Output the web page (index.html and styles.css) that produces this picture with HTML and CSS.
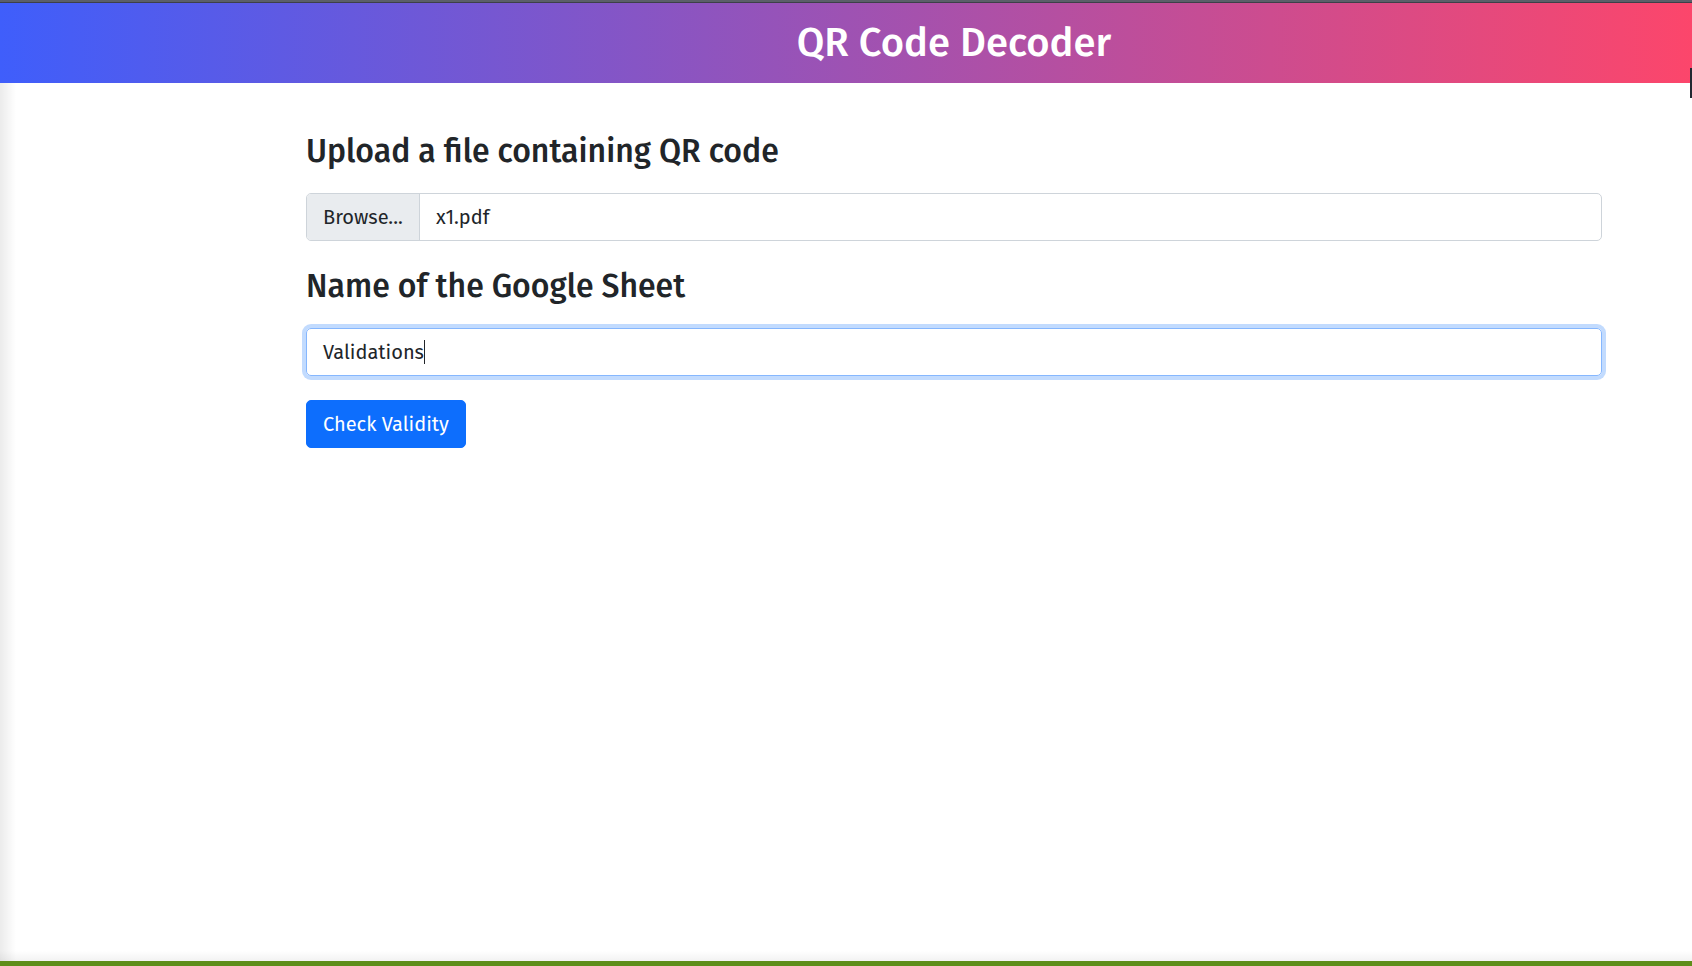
FILE: index.html
```html
<!DOCTYPE html>
<html lang="en">
<head>
<meta charset="utf-8">
<title>QR Code Decoder</title>
<link rel="stylesheet" href="styles.css">
</head>
<body>
<div class="topline"></div>
<header class="header">
  <h1 class="header-title">QR Code Decoder</h1>
  <span class="edge-marker"></span>
</header>
<main class="main">
  <div class="container">
    <form class="form">
      <h2 class="section-title title-upload">Upload a file containing QR code</h2>
      <div class="file-field">
        <span class="file-browse">Browse...</span>
        <span class="file-name">x1.pdf</span>
      </div>
      <h2 class="section-title title-sheet">Name of the Google Sheet</h2>
      <div class="text-field is-focused" role="textbox"><span class="text-value">Validations</span><span class="caret"></span></div>
      <button type="button" class="btn-primary">Check Validity</button>
    </form>
  </div>
</main>
<footer class="bottomline"></footer>
</body>
</html>
```

FILE: styles.css
```css
* { box-sizing: border-box; }

html, body {
  margin: 0;
  padding: 0;
  height: 966px;
  overflow: hidden;
}

body {
  display: flex;
  flex-direction: column;
  font-family: "Fira Sans", Roboto, "Liberation Sans", sans-serif;
  color: #212529;
  background: #ffffff;
}

.topline {
  height: 3px;
  background: #5b5f69;
  border-bottom: 1px solid #3d4049;
  flex: none;
}

.header {
  position: relative;
  height: 80px;
  flex: none;
  background: linear-gradient(90deg, #3f5efb 0%, #fc466b 100%);
  display: flex;
  align-items: center;
  justify-content: center;
  padding-left: 216px;
}

.header-title {
  margin: 0;
  color: #ffffff;
  font-size: 40px;
  font-weight: 500;
  line-height: 1.2;
}

.edge-marker {
  position: absolute;
  right: 0;
  top: 65px;
  width: 2px;
  height: 30px;
  background: #222831;
  z-index: 2;
}

.main {
  flex: 1;
  padding-left: 216px;
  background:
    linear-gradient(to right, rgba(0,0,0,0.08), rgba(0,0,0,0) 16px),
    linear-gradient(to top, rgba(0,0,0,0.05), rgba(0,0,0,0) 10px),
    #ffffff;
}

.container {
  max-width: 1320px;
  margin: 0 auto;
  padding: 49px 12px 0;
}

.form {
  display: flex;
  flex-direction: column;
  align-items: flex-start;
}

.section-title {
  margin: 0;
  font-size: 32px;
  font-weight: 500;
  line-height: 38px;
}

.title-upload { margin-bottom: 23px; }
.title-sheet { margin-top: 26px; margin-bottom: 23px; }

.file-field {
  width: 100%;
  height: 48px;
  display: flex;
  border: 1px solid #ced4da;
  border-radius: 5px;
  overflow: hidden;
  font-size: 20px;
  line-height: 30px;
}

.file-browse {
  background: #e9ecef;
  border-right: 1px solid #ced4da;
  padding: 8px 16px;
  width: 113px;
  color: #212529;
}

.file-name {
  padding: 8px 16px;
}

.text-field {
  width: 100%;
  height: 48px;
  display: flex;
  align-items: center;
  padding: 0 16px;
  border: 1px solid #ced4da;
  border-radius: 5px;
  font-size: 20px;
  line-height: 30px;
}

.text-field.is-focused {
  border-color: #86b7fe;
  box-shadow: 0 0 0 4px rgba(13, 110, 253, 0.25);
}

.caret {
  display: inline-block;
  width: 1px;
  height: 24px;
  background: #212529;
}

.btn-primary {
  margin-top: 24px;
  height: 48px;
  padding: 0 16px;
  border: 1px solid #0d6efd;
  border-radius: 5px;
  background: #0d6efd;
  color: #ffffff;
  font-family: inherit;
  font-size: 20px;
  line-height: 30px;
  cursor: pointer;
}

.bottomline {
  height: 5px;
  flex: none;
  background: #5e8e1a;
}
```
